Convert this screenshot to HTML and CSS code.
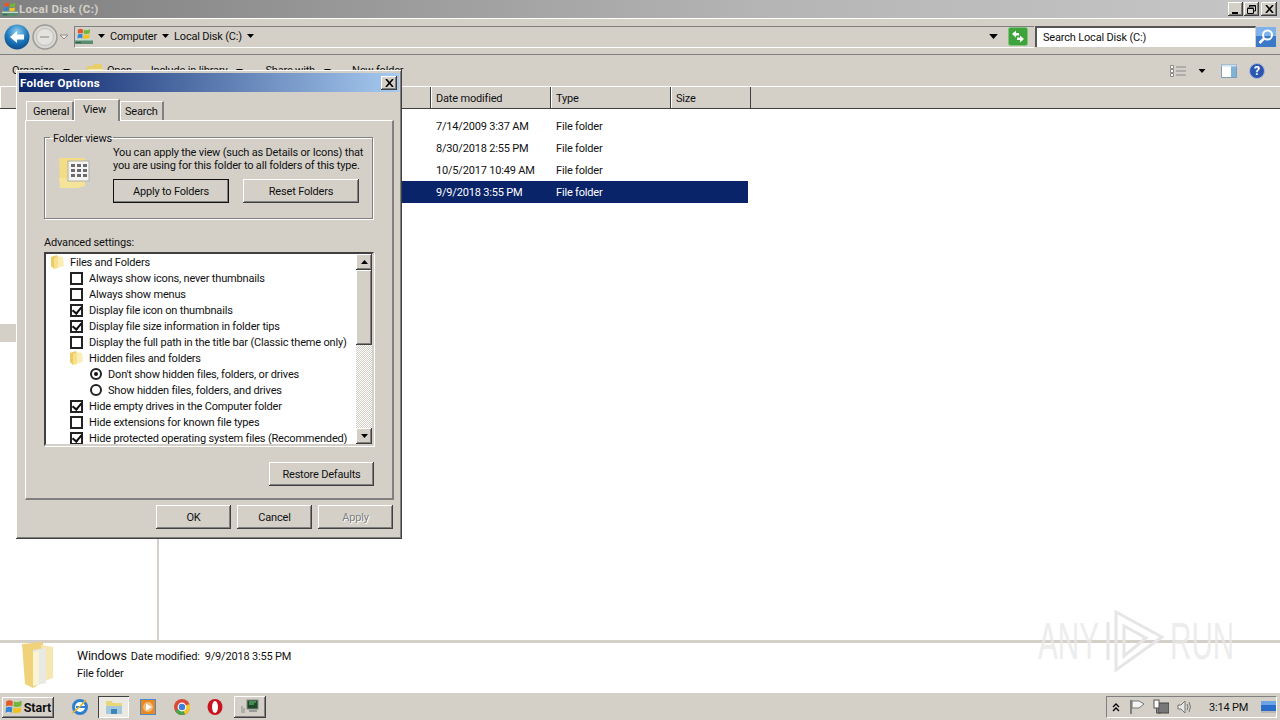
FILE: index.html
```html
<!DOCTYPE html>
<html lang="en">
  <head>
    <meta charset="UTF-8" />
    <title>Local Disk (C:)</title>
    <link rel="stylesheet" href="styles.css">
  </head>
  <body>
    <svg class="defs" width="0" height="0">
      <symbol id="flag" viewBox="0 0 16 16">
        <path d="M1 3 Q4 1 7 3 L6.500 7.500 Q4 6 1 7.500Z" fill="#e2582c"/>
        <path d="M8 3.200 Q11 4.500 15 2.500 L14.500 7 Q11 8.500 7.500 7.500Z" fill="#6fb73b"/>
        <path d="M1 8.500 Q4 7 6.400 8.500 L6 13 Q3.500 11.500 .5 13Z" fill="#2f86d8"/>
        <path d="M7.400 8.600 Q11 9.800 14.400 8 L14 12.500 Q10.500 14 7 13Z" fill="#f2c21e"/>
      </symbol>
      <symbol id="drive" viewBox="0 0 18 18">
        <use href="#flag" width="14" height="14" x="2" y="0"/>
        <path d="M0 12H18V17H0Z" fill="#5b8c70"/>
        <path d="M0 12H18V13.500H0Z" fill="#c2dccb"/>
        <path d="M1 15.500H6" stroke="#2f5a44"/>
      </symbol>
      <symbol id="folder" viewBox="0 0 16 16">
        <path d="M2 3 L8 1 L8 13 L5 15 L2 12Z" fill="#eccb62"/>
        <path d="M8 2 L14 3 L15 12 L8 14Z" fill="#fbeeb4"/>
        <path d="M5 4 L9 2 L9 14 L5 15Z" fill="#f7e08e"/>
      </symbol>
      <symbol id="caret" viewBox="0 0 7 4">
        <path d="M0 0H7L3.500 4Z" fill="#000"/>
      </symbol>
    </svg>

    <div class="window">
      <div class="title-bar">
        <svg class="title-icon" width="16" height="16"><use href="#drive"/></svg>
        <span class="title-text">Local Disk (C:)</span>
        <div class="win-buttons">
          <span class="btn win-btn"><i class="glyph-min"></i></span>
          <span class="btn win-btn">
            <svg width="9" height="9" viewBox="0 0 9 9"><path d="M2.500 2V.5H8.500V6H6.500M.5 3.500H6.500V8.500H.5Z M2.500 1H8.500 M.5 3H6.500" fill="none" stroke="#000"/></svg>
          </span>
          <span class="btn win-btn close"><svg width="9" height="8" viewBox="0 0 9 8"><path d="M1 0L8 8M8 0L1 8" stroke="#000" stroke-width="1.600"/></svg></span>
        </div>
      </div>

      <nav class="nav-bar">
        <svg class="nav-arrows" width="68" height="28" viewBox="0 0 68 28">
          <defs>
            <radialGradient id="blue" cx=".5" cy=".3" r=".8">
              <stop offset="0" stop-color="#8fd0f2"/>
              <stop offset=".55" stop-color="#1a74b8"/>
              <stop offset="1" stop-color="#0a3f78"/>
            </radialGradient>
          </defs>
          <circle cx="13" cy="14" r="12.500" fill="url(#blue)"/>
          <path d="M6 14L13 8V11.500H20V16.500H13V20Z" fill="#fff"/>
          <circle cx="41" cy="14" r="12" fill="#d9d7d2" stroke="#9a9a96" stroke-width="1.500"/>
          <circle cx="41" cy="14" r="8.500" fill="#e4e2de" stroke="#c2c0bb"/>
          <path d="M36 14H45" fill="none" stroke="#b5b3ae" stroke-width="2"/>
          <path d="M56 12H64L60 16Z" fill="#ecebe8" stroke="#8c8c8c"/>
        </svg>
        <div class="address">
          <svg class="crumb-icon" width="18" height="18"><use href="#drive"/></svg>
          <svg class="caret crumb-caret" width="7" height="4"><use href="#caret"/></svg>
          <span class="crumb">Computer</span>
          <svg class="caret crumb-caret" width="7" height="4"><use href="#caret"/></svg>
          <span class="crumb">Local Disk (C:)</span>
          <svg class="caret crumb-caret" width="7" height="4"><use href="#caret"/></svg>
          <svg class="caret address-drop" width="9" height="5" viewBox="0 0 7 4"><use href="#caret"/></svg>
          <svg class="refresh" width="20" height="19" viewBox="0 0 20 19">
            <rect x=".5" y=".5" width="19" height="18" rx="2" fill="#3da33a" stroke="#7fc47a"/>
            <path d="M4 7L8 3.500V6H11V8.500H8V10.500Z" fill="#fff"/>
            <path d="M16 12L12 15.500V13H9V10.500H12V8.500Z" fill="#fff"/>
          </svg>
        </div>
        <div class="search-box">Search Local Disk (C:)</div>
        <span class="search-btn">
          <svg width="20" height="20" viewBox="0 0 20 20">
            <rect width="20" height="20" fill="#3a78c8"/>
            <rect width="20" height="9" fill="#7fb2ea"/>
            <circle cx="11.500" cy="8" r="4.500" fill="none" stroke="#fff" stroke-width="2"/>
            <path d="M8 11.500L3.500 16" stroke="#fff" stroke-width="2.500"/>
          </svg>
        </span>
      </nav>

      <div class="tool-bar">
        <span class="tool tool-organize">Organize</span>
        <svg class="tool-caret" width="7" height="4"><use href="#caret"/></svg>
        <svg class="tool-folder" width="17" height="14" viewBox="0 0 17 14">
          <path d="M0 2H6L7 0H15V13H0Z" fill="#e8cf6a"/>
          <path d="M1 5H16V13H1Z" fill="#f6e8a4"/>
        </svg>
        <span class="tool tool-open">Open</span>
        <span class="tool tool-library">Include in library</span>
        <svg class="tool-caret" width="7" height="4"><use href="#caret"/></svg>
        <span class="tool tool-share">Share with</span>
        <svg class="tool-caret" width="7" height="4"><use href="#caret"/></svg>
        <span class="tool tool-new">New folder</span>
        <div class="tool-right">
          <svg class="view-icon" width="16" height="12" viewBox="0 0 16 12">
            <path d="M.5 .5h3v3h-3zM.5 4.500h3v3h-3zM.5 8.500h3v3h-3z" fill="#fff" stroke="#8a8a8a"/>
            <path d="M6 2H16M6 6H16M6 10H16" stroke="#8a8a8a"/>
          </svg>
          <svg class="view-caret" width="8" height="4" viewBox="0 0 7 4"><use href="#caret"/></svg>
          <svg class="pane-icon" width="16" height="14" viewBox="0 0 16 14">
            <rect x=".5" y=".5" width="15" height="13" fill="#fff" stroke="#7f9db9"/>
            <rect x="10" y="1" width="5" height="12" fill="#7fb3d8"/>
            <rect x=".5" y=".5" width="15" height="2" fill="#cfe0ee"/>
          </svg>
          <svg class="help-icon" width="16" height="16" viewBox="0 0 16 16">
            <circle cx="8" cy="8" r="7.500" fill="#2a55b0" stroke="#a8b6d8"/>
            <text x="8" y="12" class="help-mark">?</text>
          </svg>
        </div>
      </div>

      <div class="columns">
        <div class="col col-name"></div>
        <div class="col col-date">Date modified</div>
        <div class="col col-type">Type</div>
        <div class="col col-size">Size</div>
      </div>

      <div class="content">
        <aside class="side">
          <span class="side-thumb"></span>
        </aside>
        <main class="files">
          <div class="row"><span class="cell-date">7/14/2009 3:37 AM</span><span>File folder</span></div>
          <div class="row"><span class="cell-date">8/30/2018 2:55 PM</span><span>File folder</span></div>
          <div class="row"><span class="cell-date">10/5/2017 10:49 AM</span><span>File folder</span></div>
          <div class="row selected"><span class="cell-date">9/9/2018 3:55 PM</span><span>File folder</span></div>
        </main>
      </div>

      <div class="details">
        <svg class="details-icon" width="36" height="46" viewBox="0 0 36 46">
          <path d="M3 2L24 0L24 40L14 46L6 42Z" fill="#f0d27a"/>
          <path d="M22 3L34 5L34 36L22 40Z" fill="#f6e6b0"/>
          <path d="M14 8L27 6L27 41L14 44Z" fill="#e9e9e4"/>
          <path d="M14 10L20 9L20 42L14 44Z" fill="#fbf4d2"/>
        </svg>
        <div class="details-text">
          <div class="details-top">
            <span class="details-name">Windows</span>
            <span>Date modified:&nbsp; 9/9/2018 3:55 PM</span>
          </div>
          <div class="details-type">File folder</div>
        </div>
      </div>
    </div>

    <footer class="taskbar">
      <span class="btn start">
        <svg width="18" height="18"><use href="#flag"/></svg>
        <b>Start</b>
      </span>
      <div class="task-items">
        <svg class="task-icon task-ie" width="18" height="18" viewBox="0 0 18 18">
          <circle cx="9" cy="9" r="6.500" fill="#fff" stroke="#2f7fd0" stroke-width="3"/>
          <path d="M5 9H14" stroke="#2f7fd0" stroke-width="2"/>
          <path d="M1 15Q5 13 15 2" fill="none" stroke="#e8b830" stroke-width="1.500"/>
        </svg>
        <span class="task-active">
          <svg width="18" height="16" viewBox="0 0 18 16">
            <path d="M1 2H7L8 4H17V15H1Z" fill="#e8d77a"/>
            <path d="M1 7H17V15H1Z" fill="#a4c8dc"/>
            <path d="M6 10H12V15H6Z" fill="#3f86b8"/>
          </svg>
        </span>
        <svg class="task-icon task-media" width="16" height="18" viewBox="0 0 16 18">
          <rect x=".5" y="1.500" width="15" height="15" fill="#e8881f" stroke="#4a8ac8"/>
          <circle cx="8" cy="9" r="5" fill="#fff" opacity=".4"/>
          <path d="M6 5.500L12 9L6 12.500Z" fill="#fff"/>
        </svg>
        <svg class="task-icon task-chrome" width="16" height="16" viewBox="0 0 16 16">
          <circle cx="8" cy="8" r="8" fill="#d94a3a"/>
          <path d="M8 8L1 12A8 8 0 0 0 11 15.500Z" fill="#4aa34a"/>
          <path d="M8 8L11 15.500A8 8 0 0 0 15.500 5Z" fill="#f0c52e"/>
          <circle cx="8" cy="8" r="3.800" fill="#3f7fd8" stroke="#fff" stroke-width="1.200"/>
        </svg>
        <svg class="task-icon task-opera" width="16" height="18" viewBox="0 0 16 18">
          <ellipse cx="8" cy="9" rx="7.500" ry="8" fill="#c8141e"/>
          <ellipse cx="8" cy="9" rx="3" ry="6" fill="#fff"/>
        </svg>
        <span class="btn task-btn">
          <svg width="18" height="16" viewBox="0 0 18 16">
            <rect x="6" y="1" width="11" height="9" fill="#1c4a2a" stroke="#888"/>
            <path d="M8 3H15M8 5H13" stroke="#6fd06f"/>
            <path d="M1 7V14M3 9V14" stroke="#8a8a8a"/>
            <rect x="8" y="11" width="8" height="2" fill="#9a9a9a"/>
          </svg>
        </span>
      </div>
      <div class="tray">
        <svg class="tray-chevron" width="8" height="9" viewBox="0 0 8 9">
          <path d="M1 4L4 1L7 4M1 8L4 5L7 8" fill="none" stroke="#000" stroke-width="1.300"/>
        </svg>
        <svg class="tray-flag" width="16" height="16" viewBox="0 0 16 16">
          <path d="M2 1V15" stroke="#555" stroke-width="1.300"/>
          <path d="M3 2H10L15 5L10 9H3Z" fill="#f4f4f0" stroke="#777"/>
        </svg>
        <svg class="tray-net" width="16" height="16" viewBox="0 0 16 16">
          <rect x="5" y="4" width="11" height="10" fill="#777" stroke="#444"/>
          <rect x="1" y="1" width="5" height="8" fill="#fff" stroke="#555"/>
          <path d="M3.500 9V14H8" fill="none" stroke="#555"/>
        </svg>
        <svg class="tray-sound" width="16" height="16" viewBox="0 0 16 16">
          <path d="M1 6H4L8 2V14L4 10H1Z" fill="#e8e8e4" stroke="#777"/>
          <path d="M10 5Q12 8 10 11M12 3Q15 8 12 13" fill="none" stroke="#777"/>
        </svg>
        <span class="clock">3:14 PM</span>
        <svg class="tray-desktop" width="15" height="12" viewBox="0 0 15 12">
          <rect width="15" height="12" fill="#2a6cc8"/>
          <rect width="15" height="4" fill="#6aa4e4"/>
          <rect y="10" width="15" height="2" fill="#b8b8b4"/>
        </svg>
      </div>
    </footer>

    <!-- watermark -->
    <div class="watermark">
      <span class="mark-text">ANY</span>
      <svg class="mark-play" width="58" height="62" viewBox="0 0 58 62">
        <path d="M2 12V50M10 2V60L56 27Z M18 16V46L40 28Z" fill="none" stroke="#e6e6e6" stroke-width="3"/>
      </svg>
      <span class="mark-text">RUN</span>
    </div>

    <!-- folder options dialog -->
    <section class="dialog">
      <header class="dialog-title">
        <span>Folder Options</span>
        <span class="btn dialog-close"><svg width="9" height="8" viewBox="0 0 9 8"><path d="M1 0L8 8M8 0L1 8" stroke="#000" stroke-width="1.600"/></svg></span>
      </header>

      <div class="tabs">
        <span class="tab tab-general">General</span>
        <span class="tab tab-view">View</span>
        <span class="tab tab-search">Search</span>
      </div>

      <div class="tab-panel">
        <fieldset class="views">
          <legend>Folder views</legend>
          <svg class="views-icon" width="32" height="34" viewBox="0 0 32 34">
            <path d="M0 2H26V30L18 32H1Z" fill="#f2dc86"/>
            <path d="M0 22H26V30L18 32H1Z" fill="#f5e39a"/>
            <rect x="9" y="5" width="21" height="20" fill="#f4f4f2" stroke="#b0b0ac"/>
            <path d="M12 8h4v3h-4zM18 8h4v3h-4zM24 8h4v3h-4zM12 13h4v3h-4zM18 13h4v3h-4zM24 13h4v3h-4zM12 18h4v3h-4zM18 18h4v3h-4zM24 18h4v3h-4z" fill="#6a6a70"/>
          </svg>
          <div class="views-body">
            <p>You can apply the view (such as Details or Icons) that<br>you are using for this folder to all folders of this type.</p>
            <div class="views-buttons">
              <span class="btn btn-default">Apply to Folders</span>
              <span class="btn btn-reset">Reset Folders</span>
            </div>
          </div>
        </fieldset>

        <div class="adv-label">Advanced settings:</div>

        <div class="tree">
          <ul class="tree-list">
            <li class="lv1"><svg width="16" height="16"><use href="#folder"/></svg><span>Files and Folders</span></li>
            <li class="lv2"><i class="check"></i><span>Always show icons, never thumbnails</span></li>
            <li class="lv2"><i class="check"></i><span>Always show menus</span></li>
            <li class="lv2"><i class="check on"></i><span>Display file icon on thumbnails</span></li>
            <li class="lv2"><i class="check on"></i><span>Display file size information in folder tips</span></li>
            <li class="lv2"><i class="check"></i><span>Display the full path in the title bar (Classic theme only)</span></li>
            <li class="lv2 folder-item"><svg width="16" height="16"><use href="#folder"/></svg><span>Hidden files and folders</span></li>
            <li class="lv3"><i class="radio on"></i><span>Don't show hidden files, folders, or drives</span></li>
            <li class="lv3"><i class="radio"></i><span>Show hidden files, folders, and drives</span></li>
            <li class="lv2"><i class="check on"></i><span>Hide empty drives in the Computer folder</span></li>
            <li class="lv2"><i class="check"></i><span>Hide extensions for known file types</span></li>
            <li class="lv2"><i class="check on"></i><span>Hide protected operating system files (Recommended)</span></li>
          </ul>
          <div class="scrollbar">
            <span class="btn sb-btn"><svg width="7" height="4" viewBox="0 0 7 4"><path d="M0 4H7L3.500 0Z"/></svg></span>
            <span class="btn sb-thumb"></span>
            <span class="sb-track"></span>
            <span class="btn sb-btn"><svg width="7" height="4"><use href="#caret"/></svg></span>
          </div>
        </div>

        <div class="restore-row">
          <span class="btn btn-restore">Restore Defaults</span>
        </div>
      </div>

      <div class="dialog-actions">
        <span class="btn btn-action">OK</span>
        <span class="btn btn-action">Cancel</span>
        <span class="btn btn-action disabled">Apply</span>
      </div>
    </section>
  </body>
</html>
```

FILE: styles.css
```css
* {
  box-sizing: border-box;
}

html,
body {
  margin: 0;
  padding: 0;
}

body {
  width: 1280px;
  height: 720px;
  overflow: hidden;
  position: relative;
  font-family: Roboto, "Liberation Sans", sans-serif;
  font-size: 11px;
  letter-spacing: -0.18px;
  color: #111;
  background: #fff;
  display: flex;
  flex-direction: column;
}

.defs {
  position: absolute;
}

svg {
  display: block;
  flex: none;
}

.btn {
  display: flex;
  align-items: center;
  justify-content: center;
  background: #d4d0c8;
  box-shadow: inset -1px -1px #404040, inset 1px 1px #fff, inset -2px -2px #808080;
}

.window {
  flex: 1;
  display: flex;
  flex-direction: column;
  min-height: 0;
}

/* title bar */
.title-bar {
  height: 18px;
  flex: none;
  display: flex;
  align-items: center;
  padding: 0 3px 0 2px;
  background: linear-gradient(to right, #808080, #b5b5b5 60%, #c6c6c6);
}

.title-text {
  margin-left: 1px;
  font-weight: bold;
  font-size: 11.500px;
  letter-spacing: 0.3px;
  color: #d4d0c8;
}

.win-buttons {
  margin-left: auto;
  display: flex;
  gap: 1px;
}

.win-btn {
  width: 15px;
  height: 14px;
}

.win-btn.close {
  width: 16px;
  margin-left: 1px;
}

.glyph-min {
  width: 6px;
  height: 2px;
  background: #000;
  margin-top: 7px;
  margin-right: 2px;
}

/* address row */
.nav-bar {
  height: 37px;
  flex: none;
  display: flex;
  align-items: center;
  padding: 0 4px 0 4px;
  background: #d4d0c8;
  border-top: 1px solid #fff;
  border-bottom: 1px solid #808080;
}

.nav-arrows {
  margin-right: 2px;
}

.address {
  width: 960px;
  height: 22px;
  display: flex;
  align-items: center;
  border-top: 1px solid #808080;
  border-left: 1px solid #808080;
  border-bottom: 1px solid #fff;
  padding-bottom: 1px;
}

.crumb-icon {
  margin-right: 5px;
}

.crumb-caret {
  margin-right: 5px;
}

.crumb {
  margin-right: 5px;
}

.address-drop {
  margin-left: auto;
  margin-right: 10px;
}

.refresh {
  margin-right: 6px;
}

.search-box {
  width: 221px;
  height: 21px;
  margin-left: 1px;
  padding: 3px 0 0 6px;
  background: #fff;
  border-top: 2px solid #555;
  border-left: 2px solid #555;
  border-right: 1px solid #d4d0c8;
}

/* toolbar */
.tool-bar {
  height: 31px;
  flex: none;
  display: flex;
  align-items: center;
  background: #d4d0c8;
}

.tool-organize {
  margin-left: 12px;
}

.tool-caret {
  margin-left: 9px;
}

.tool-folder {
  margin-left: 17px;
}

.tool-open {
  margin-left: 3px;
}

.tool-library {
  margin-left: 19px;
}

.tool-share {
  margin-left: 22px;
}

.tool-new {
  margin-left: 21px;
}

.tool-right {
  margin-left: auto;
  display: flex;
  align-items: center;
  padding-right: 15px;
}

.view-caret {
  margin-left: 12px;
}

.pane-icon {
  margin-left: 15px;
}

.help-icon {
  margin-left: 12px;
}

.help-mark {
  font-size: 12px;
  font-weight: bold;
  fill: #fff;
  text-anchor: middle;
}

/* column header */
.columns {
  height: 23px;
  flex: none;
  display: flex;
  background: #d4d0c8;
  border-top: 1px solid #fff;
  border-bottom: 1px solid #404040;
}

.col {
  display: flex;
  align-items: center;
  padding: 1px 0 0 4px;
  border-right: 1px solid #404040;
  border-left: 1px solid #fff;
}

.col-name {
  width: 431px;
}

.col-date,
.col-type {
  width: 120px;
}

.col-size {
  width: 80px;
}

/* file list */
.content {
  flex: 1;
  display: flex;
  min-height: 0;
}

.side {
  width: 159px;
  flex: none;
  position: relative;
  border-right: 2px solid #d4d0c8;
}

.side-thumb {
  position: absolute;
  left: 0;
  top: 215px;
  width: 16px;
  height: 18px;
  background: #d4d0c8;
}

.files {
  flex: 1;
  padding-top: 6px;
}

.row {
  width: 589px;
  height: 22px;
  display: flex;
  align-items: center;
  padding-left: 277px;
}

.row.selected {
  background: #0a246a;
  color: #fff;
}

.cell-date {
  width: 120px;
}

/* details pane */
.details {
  height: 52px;
  flex: none;
  display: flex;
  background: #fff;
  border-top: 3px solid #d4d0c8;
  padding-left: 19px;
}

.details-icon {
  margin-top: -1px;
}

.details-text {
  margin-left: 22px;
  padding-top: 5px;
}

.details-top {
  display: flex;
  align-items: baseline;
  gap: 4px;
}

.details-name {
  font-size: 12.500px;
}

.details-type {
  margin-top: 4px;
}

/* taskbar */
.taskbar {
  height: 28px;
  flex: none;
  display: flex;
  align-items: center;
  background: #d4d0c8;
  border-top: 1px solid #fff;
  padding: 1px 3px 0 2px;
}

.start {
  width: 52px;
  height: 21px;
  gap: 1px;
  font-size: 12.500px;
  letter-spacing: 0;
}

.task-items {
  display: flex;
  align-items: center;
}

.task-ie {
  margin-left: 17px;
}

.task-active {
  width: 31px;
  height: 22px;
  margin-left: 9px;
  display: flex;
  align-items: center;
  justify-content: center;
  background: #ece9e2;
  box-shadow: inset 1px 1px #404040, inset -1px -1px #fff;
}

.task-media {
  margin-left: 11px;
}

.task-chrome {
  margin-left: 18px;
}

.task-opera {
  margin-left: 17px;
}

.task-btn {
  width: 32px;
  height: 22px;
  margin-left: 11px;
}

.tray {
  width: 171px;
  height: 22px;
  margin-left: auto;
  display: flex;
  align-items: center;
  border-top: 1px solid #808080;
  border-left: 1px solid #808080;
  border-right: 1px solid #fff;
  border-bottom: 1px solid #fff;
  padding-left: 5px;
}

.tray-flag {
  margin-left: 9px;
}

.tray-net {
  margin-left: 8px;
}

.tray-sound {
  margin-left: 8px;
}

.clock {
  margin-left: 16px;
  width: 40px;
  flex: none;
  white-space: nowrap;
  font-size: 11px;
}

.tray-desktop {
  margin-left: 12px;
}

/* watermark */
.watermark {
  position: absolute;
  left: 1038px;
  top: 610px;
  width: 194px;
  height: 62px;
  display: flex;
  align-items: center;
  justify-content: space-between;
  pointer-events: none;
}

.mark-text {
  width: 62px;
  font-family: "Liberation Sans", sans-serif;
  font-size: 52px;
  line-height: 52px;
  letter-spacing: 0;
  color: rgba(232, 232, 232, 0.8);
  transform: scaleX(0.57);
  transform-origin: left center;
}

/* dialog */
.dialog {
  position: absolute;
  left: 16px;
  top: 70px;
  width: 386px;
  height: 469px;
  padding: 3px;
  display: flex;
  flex-direction: column;
  background: #d4d0c8;
  box-shadow: inset -1px -1px #404040, inset 1px 1px #fff, inset -2px -2px #808080;
}

.dialog-title {
  height: 19px;
  flex: none;
  display: flex;
  align-items: center;
  justify-content: space-between;
  padding: 0 2px 0 1px;
  color: #fff;
  font-size: 11.500px;
  font-weight: bold;
  letter-spacing: 0.3px;
  background: linear-gradient(to right, #0a246a, #a6caf0);
}

.dialog-close {
  width: 16px;
  height: 14px;
}

.tabs {
  height: 28px;
  flex: none;
  display: flex;
  align-items: flex-end;
  padding: 0 0 0 7px;
}

.tab {
  height: 19px;
  flex: none;
  padding: 3px 0 0 6px;
  border-top: 1px solid #fff;
  border-left: 1px solid #fff;
  border-right: 2px solid #808080;
}

.tab-general {
  width: 48px;
}

.tab-view {
  width: 46px;
  height: 22px;
  padding: 3px 0 0 8px;
  margin-bottom: -1px;
  background: #d4d0c8;
  position: relative;
}

.tab-search {
  width: 44px;
  padding-left: 4px;
}

.tab-panel {
  width: 369px;
  height: 380px;
  margin-left: 6px;
  padding: 9px 18px 0 18px;
  flex: none;
  border-top: 1px solid #fff;
  border-left: 1px solid #fff;
  border-right: 2px solid #808080;
  border-bottom: 2px solid #808080;
}

.views {
  width: 329px;
  min-width: 0;
  height: 89px;
  margin: 0;
  padding: 0 4px 0 14px;
  display: flex;
  border: 1px solid #808080;
  box-shadow: 1px 1px #fff, inset 1px 1px #fff;
}

.views legend {
  margin-left: -9px;
  padding: 2px 1px 0 3px;
}

.views-icon {
  margin-top: 11px;
  margin-right: 22px;
}

.views-body {
  flex: 1;
  min-width: 0;
  white-space: nowrap;
}

.views-body p {
  margin: 1px 0 0;
  line-height: 13px;
}

.views-buttons {
  display: flex;
  gap: 14px;
  margin-top: 7px;
}

.views-buttons .btn {
  width: 116px;
  height: 24px;
}

.btn-default {
  outline: 1px solid #111;
  outline-offset: -1px;
}

.adv-label {
  margin-top: 16px;
  height: 17px;
  line-height: 16px;
}

.tree {
  width: 330px;
  height: 194px;
  display: flex;
  background: #fff;
  border: 2px solid;
  border-color: #404040 #d4d0c8 #d4d0c8 #404040;
  box-shadow: 1px 1px #fff;
}

.tree-list {
  flex: 1;
  margin: 0;
  padding: 0;
  list-style: none;
  overflow: hidden;
  white-space: nowrap;
}

.tree-list li {
  height: 16px;
  display: flex;
  align-items: center;
  gap: 6px;
}

.lv1 {
  padding-left: 3px;
}

.tree-list .lv1 {
  gap: 5px;
}

.lv2 {
  padding-left: 24px;
}

.tree-list .folder-item {
  gap: 5px;
  padding-left: 22px;
}

.lv3 {
  padding-left: 43px;
}

.check,
.radio {
  width: 13px;
  height: 13px;
  flex: none;
  position: relative;
  background: #fff;
  border: 2px solid #222;
}

.radio {
  width: 12px;
  height: 12px;
  border-radius: 50%;
  margin-left: 1px;
}

.check.on::after {
  content: "";
  position: absolute;
  left: 2px;
  top: -1px;
  width: 4px;
  height: 7px;
  border: solid #111;
  border-width: 0 2px 2px 0;
  transform: rotate(40deg);
}

.radio.on::after {
  content: "";
  position: absolute;
  left: 2px;
  top: 2px;
  width: 4px;
  height: 4px;
  border-radius: 50%;
  background: #111;
}

.scrollbar {
  width: 16px;
  display: flex;
  flex-direction: column;
  flex: none;
}

.sb-btn {
  height: 16px;
  flex: none;
}

.sb-thumb {
  height: 75px;
  flex: none;
}

.sb-track {
  flex: 1;
  background: repeating-conic-gradient(#fff 0 25%, #d4d0c8 0 50%) 0 0 / 2px 2px;
}

.restore-row {
  display: flex;
  justify-content: flex-end;
  margin-top: 16px;
}

.btn-restore {
  width: 105px;
  height: 24px;
}

.dialog-actions {
  display: flex;
  justify-content: flex-end;
  gap: 6px;
  padding: 5px 6px 0 0;
}

.btn-action {
  width: 75px;
  height: 24px;
}

.disabled {
  color: #808080;
  text-shadow: 1px 1px #fff;
}
```
